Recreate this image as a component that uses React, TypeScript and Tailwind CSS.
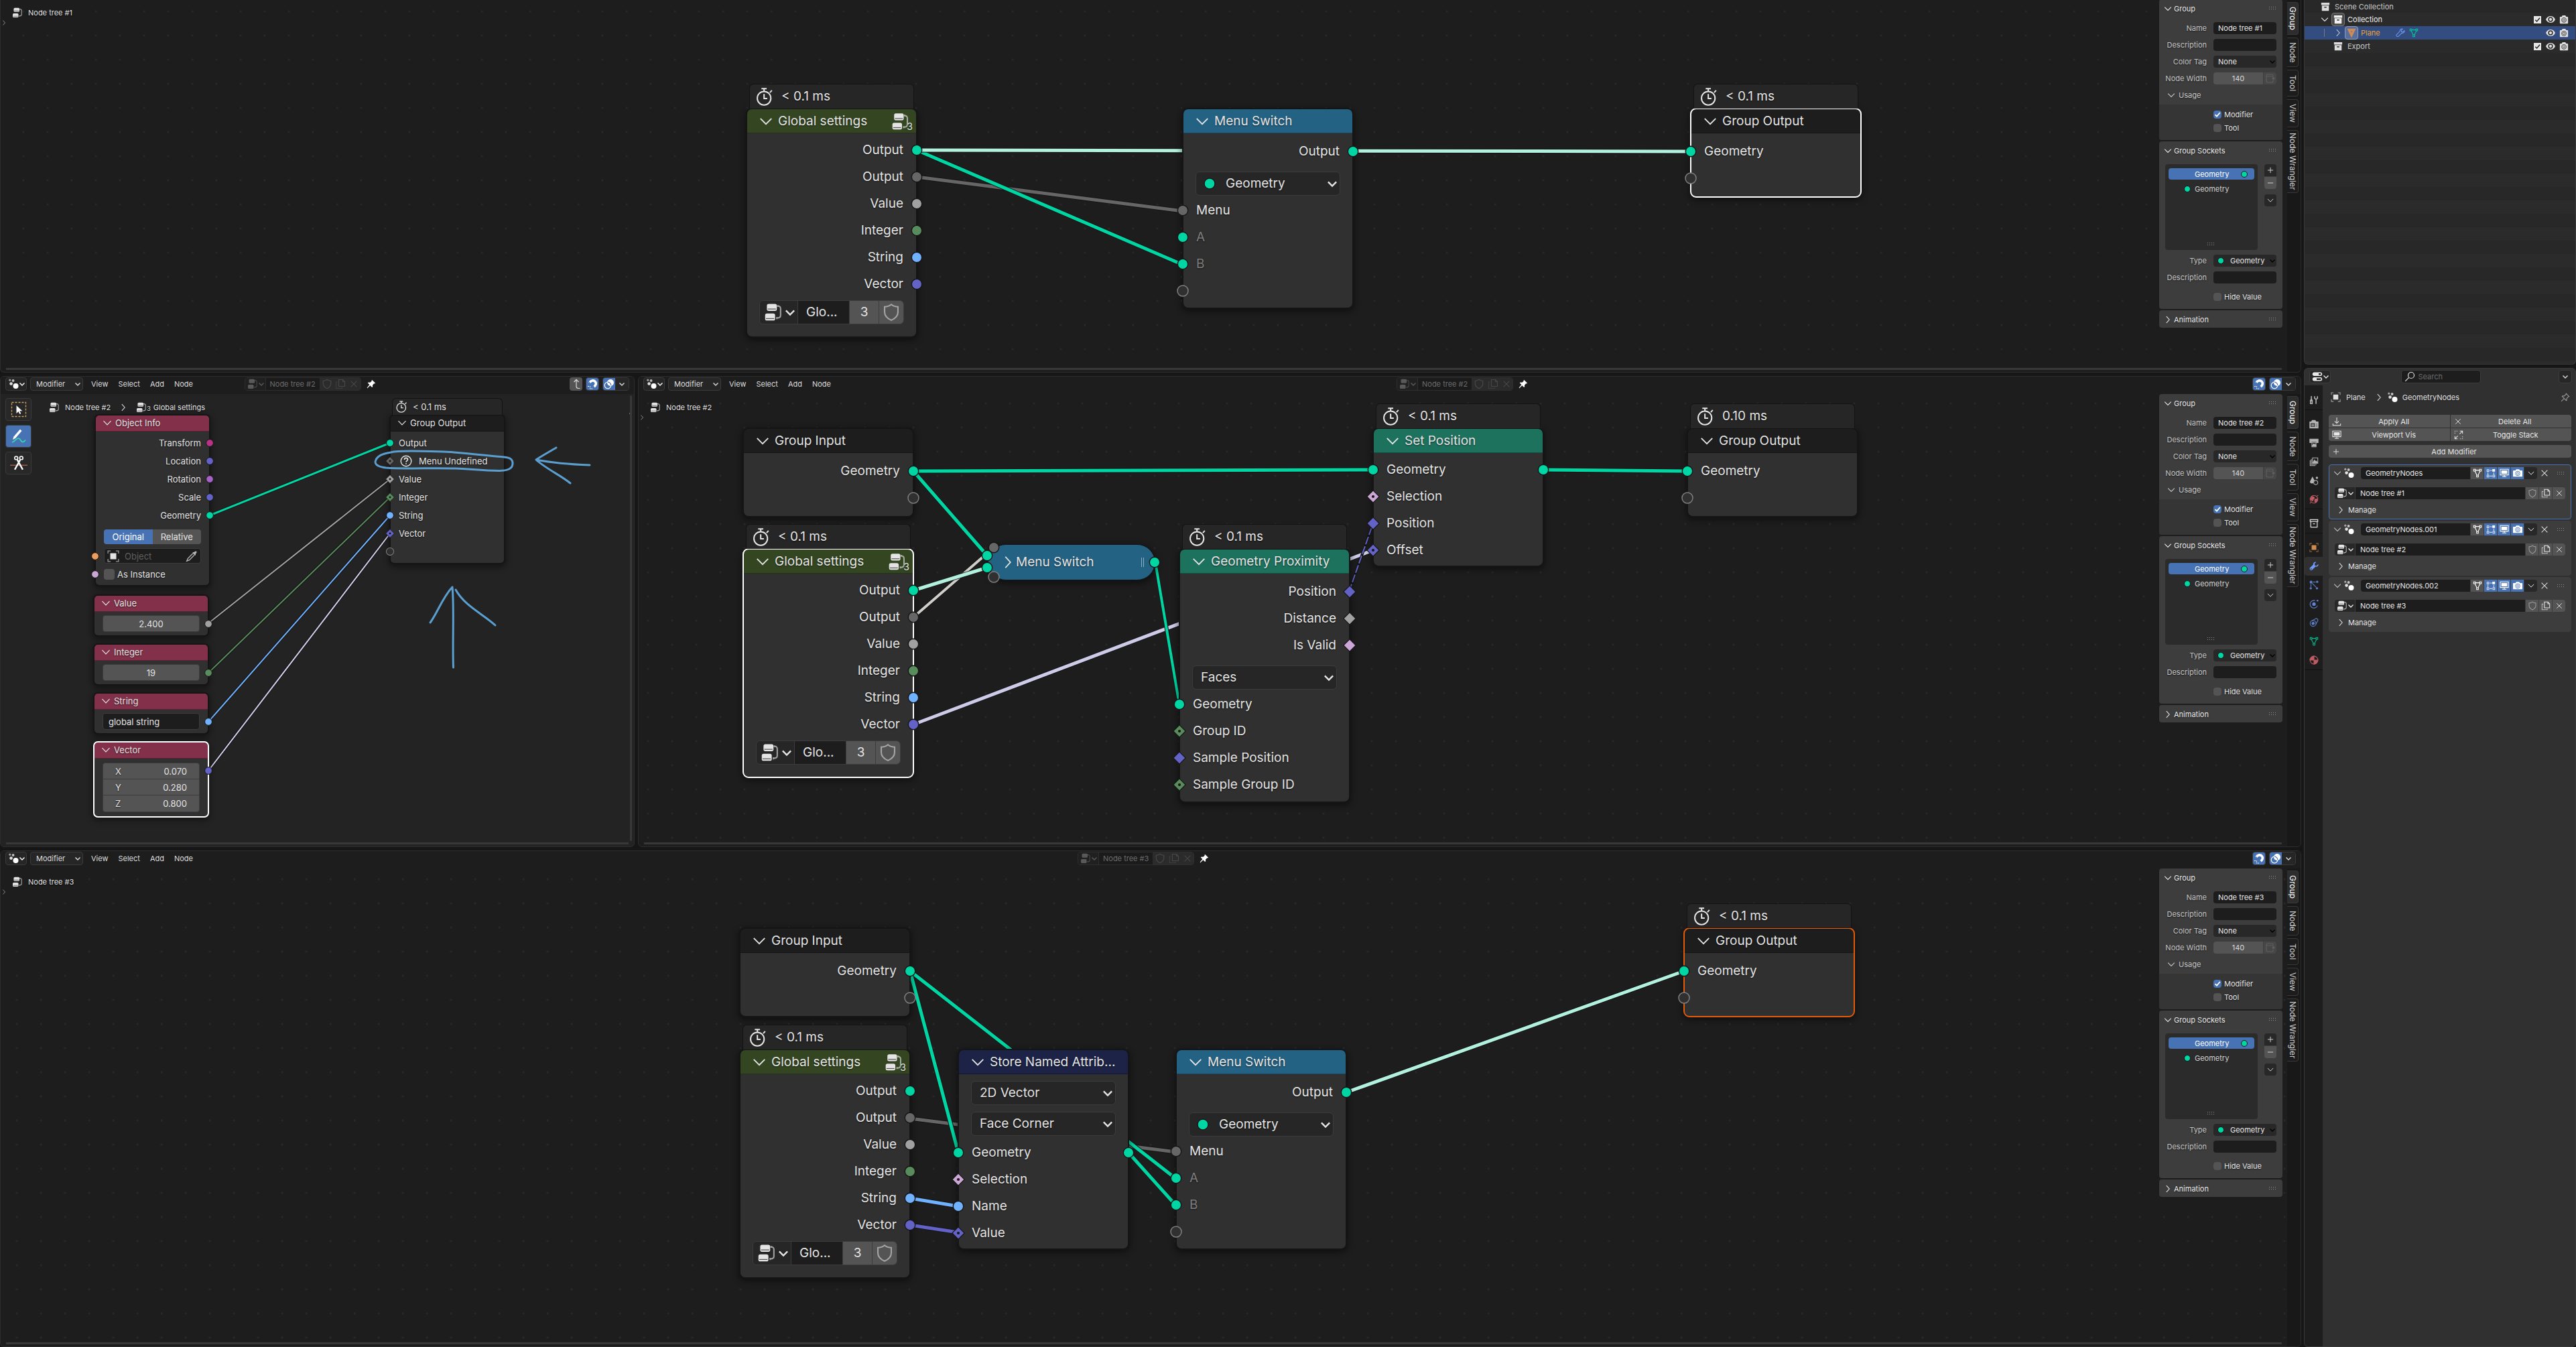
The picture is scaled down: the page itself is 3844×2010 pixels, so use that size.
import React, { useId } from "react";

type Kind =
  | "geometry" | "menu" | "value" | "integer" | "string" | "vector"
  | "boolean" | "rotation" | "matrix" | "object" | "virtual";
type Shape = "circle" | "diamond" | "field";
type Size = "lg" | "sm";

const SOCKET_FILL: Record<Kind, string> = {
  geometry: "#00d6a3",
  menu: "#666666",
  value: "#a1a1a1",
  integer: "#598c5c",
  string: "#70b2ff",
  vector: "#6363c7",
  boolean: "#cca6d6",
  rotation: "#a663c7",
  matrix: "#b83385",
  object: "#ed9e5c",
  virtual: "#303030",
};

/* ---------- icons ---------- */

type IconProps = { className?: string };

function Svg({ className = "size-3.5", children }: IconProps & { children: React.ReactNode }) {
  return (
    <svg viewBox="0 0 16 16" className={`shrink-0 ${className}`} fill="none" stroke="currentColor" strokeWidth="1.2" aria-hidden="true">
      {children}
    </svg>
  );
}

const ChevronDown = ({ className }: IconProps) => (
  <Svg className={className}><path d="M2.5 5.2 8 10.8l5.5-5.6" /></Svg>
);
const ChevronRight = ({ className }: IconProps) => (
  <Svg className={className}><path d="M5.5 2.5 10.5 8l-5 5.5" /></Svg>
);
const SmallChevron = ({ className }: IconProps) => (
  <Svg className={className}><path d="M4.5 6.5 8 10l3.5-3.5" strokeWidth="1.4" /></Svg>
);
const TreeIcon = ({ className }: IconProps) => (
  <Svg className={className}>
    <rect x="2.5" y="0.8" width="8.5" height="6" rx="1.5" fill="currentColor" stroke="none" />
    <path d="M3.2 5.2h7" stroke="#555" strokeWidth="0.7" />
    <rect x="1" y="9" width="8.5" height="6" rx="1.5" fill="currentColor" stroke="none" />
    <path d="M1.7 13.3h7" stroke="#555" strokeWidth="0.7" />
    <path d="M12 2.6c1.5.2 2.2 1 2.2 2.4v5.5c0 1.5-1 2.3-3 2.4M11.8 1.8v1.6M11 12v1.8" opacity="0.65" />
  </Svg>
);
const GeoNodesIcon = ({ className }: IconProps) => (
  <Svg className={className}>
    <g fill="currentColor" stroke="none">
      <circle cx="2.8" cy="2.2" r="1.6" opacity="0.55" />
      <circle cx="7.6" cy="3" r="1.9" opacity="0.7" />
      <circle cx="4.6" cy="7.6" r="2.3" opacity="0.85" />
      <circle cx="11.5" cy="11" r="4" />
    </g>
  </Svg>
);
const ShieldIcon = ({ className }: IconProps) => (
  <Svg className={className}><path d="M8 1.3c1.6 1.3 3.4 2 5.7 2v4.5c0 3.3-2.6 5.5-5.7 7-3.1-1.5-5.7-3.7-5.7-7V3.3c2.3 0 4.1-.7 5.7-2z" /></Svg>
);
const CopyIcon = ({ className }: IconProps) => (
  <Svg className={className}>
    <path d="M5.5 1.5h6l3 3v7h-9z" />
    <path d="M11.5 1.5v3h3" />
    <path d="M3.5 5h-2v9.5h9v-1.5" opacity="0.7" />
  </Svg>
);
const CloseIcon = ({ className }: IconProps) => (
  <Svg className={className}><path d="m3 3 10 10m0-10-10 10" /></Svg>
);
const PinFilled = ({ className }: IconProps) => (
  <Svg className={className}>
    <path d="M9.5 1 15 6.5l-1.2 1-1-.4-2.6 2.8.3 2.8-1.2 1L6.1 10.5 1.5 15l-.7-.2.2-.7 4-4.9L2 6.3l1.2-1.1 2.8.3L8.8 3l-.4-1z" fill="currentColor" stroke="none" />
  </Svg>
);
const PinOutline = ({ className }: IconProps) => (
  <Svg className={className}>
    <path d="M9.5 1.5 14.5 6.5 13 7l-2.7 3 .2 2.5-.8.8L2.7 6.3l.8-.8 2.5.2L9 3zM6 10l-4.8 4.8" />
  </Svg>
);
const MagnetIcon = ({ className }: IconProps) => (
  <Svg className={className}>
    <path d="M3.6 6.2C6 2.6 9.6 1.8 12 4.2s1.5 5.6-1.6 8.3" strokeWidth="3.6" />
    <path d="M2.4 4.4 5.6 7.4M8.6 10.4l3.2 3.2" stroke="#4772b3" strokeWidth="1" />
    <path d="M1 11.5h3.5V15H8" strokeDasharray="2 1" strokeWidth="1" />
  </Svg>
);
const OverlayIcon = ({ className }: IconProps) => (
  <Svg className={className}>
    <circle cx="10" cy="6" r="5" fill="currentColor" stroke="none" />
    <circle cx="6" cy="10" r="4.8" />
    <path d="M6 5.2A4.8 4.8 0 0 1 10.8 10" stroke="#4772b3" />
  </Svg>
);
const ParentIcon = ({ className }: IconProps) => (
  <Svg className={className}><path d="M4.5 5 8 1.3 11.5 5M8 1.5v10c0 2 1 3 3 3h2.5" /></Svg>
);
const CameraIcon = ({ className }: IconProps) => (
  <Svg className={className}>
    <path d="M1 4.5c0-.6.4-1 1-1h2.2L5.5 1h5l1.3 2.5H14c.6 0 1 .4 1 1V14c0 .6-.4 1-1 1H2c-.6 0-1-.4-1-1z" fill="currentColor" stroke="none" />
    <circle cx="8" cy="9" r="4" stroke="#333" strokeWidth="1" />
    <circle cx="8" cy="9" r="1.9" stroke="#333" strokeWidth="0.9" />
  </Svg>
);
const RenderIcon = ({ className }: IconProps) => (
  <Svg className={className}>
    <path d="M0 4.5c0-.6.4-1 1-1h3.2L5.5 1.5h5l1.3 2H15c.6 0 1 .4 1 1V13c0 .6-.4 1-1 1H1c-.6 0-1-.4-1-1z" fill="currentColor" stroke="none" />
    <circle cx="8" cy="8.5" r="3.8" stroke="#4772b3" strokeWidth="1" />
    <circle cx="8" cy="8.5" r="1.7" stroke="#4772b3" strokeWidth="0.9" />
  </Svg>
);
const EyeIcon = ({ className }: IconProps) => (
  <Svg className={className}>
    <path d="M0 8c1.8-3.8 4.7-5.6 8-5.6S14.2 4.2 16 8c-1.8 3.8-4.7 5.6-8 5.6S1.8 11.8 0 8z" fill="currentColor" stroke="none" />
    <circle cx="8" cy="8" r="3.3" stroke="#2b2b2b" strokeWidth="1.7" />
  </Svg>
);
const CollectionIcon = ({ className }: IconProps) => (
  <Svg className={className}>
    <path d="M1 1h14v4H1zM2 6h12v9H2z" fill="currentColor" stroke="none" />
    <path d="M6 9h4" stroke="#333" strokeWidth="1.8" />
  </Svg>
);
const CollectionOutline = ({ className }: IconProps) => (
  <Svg className={className}><path d="M1.5 1.5h13v3.3h-13zM2.5 4.8h11v9.7h-11zM6.3 8.6h3.4" strokeWidth="1.4" /></Svg>
);
const MeshIcon = ({ className }: IconProps) => (
  <Svg className={className}>
    <path d="M1.5 1.5h3v3h-3zM11.5 1.5h3v3h-3zM6.5 11.5h3v3h-3zM4.5 3h7M3.5 4.5l3.5 7M12.5 4.5 9 11.5" />
  </Svg>
);
const WrenchIcon = ({ className }: IconProps) => (
  <Svg className={className}>
    <path d="M14.6 4.2 12 6.5 9.7 6.2 9.3 4l2.5-2.6c-2.5-.8-5 1-4.6 3.9L1.6 11c-1.5 1.5.9 4.5 3 2.8l5.6-5.5c2.9.6 5.2-1.6 4.4-4.1z" />
  </Svg>
);
const WrenchFilled = ({ className }: IconProps) => (
  <Svg className={className}>
    <path d="M15.3 4.2 12.3 7 9.5 6.5 9 3.7 11.8.8C9 0 6.3 2 6.7 5.2L1.2 10.7c-1.8 1.9 1.2 5.6 3.7 3.5l5.7-5.5c3.2.6 5.6-1.7 4.7-4.5z" fill="currentColor" stroke="none" />
    <circle cx="3.2" cy="12.6" r="1" fill="#303030" stroke="none" />
  </Svg>
);
const ObjectIcon = ({ className }: IconProps) => (
  <Svg className={className}>
    <path d="M1 4.5V1h3.5M11.5 1H15v3.5M15 11.5V15h-3.5M4.5 15H1v-3.5" opacity="0.6" />
    <path d="M4 4h8v8H4z" fill="currentColor" stroke="none" />
  </Svg>
);
const EditModeIcon = ({ className }: IconProps) => (
  <Svg className={className}>
    <path d="M1.5 2h3v3h-3zM1.5 11.5h3v3h-3zM11.5 11.5h3v3h-3zM6 3.5h4M3 6.5v4M13 6.5v4M6 13h4" opacity="0.8" />
    <path d="M10.5 1H15v4.5h-4.5z" fill="currentColor" stroke="none" />
  </Svg>
);
const MonitorIcon = ({ className }: IconProps) => (
  <Svg className={className}>
    <path d="M1 1.5h14V11H1zM8 11v2.5M4.5 14h7" />
    <path d="M3 3.5h10V9H3z" fill="currentColor" stroke="none" />
  </Svg>
);
const DownloadIcon = ({ className }: IconProps) => (
  <Svg className={className}><path d="M8 1v10M4.5 7.5 8 11l3.5-3.5M1.5 11.5v3h13v-3" /></Svg>
);
const ExpandIcon = ({ className }: IconProps) => (
  <Svg className={className}>
    <path d="M9.5 6.5 14.5 1.5M10 1.5h4.5V6M6.5 9.5l-5 5M1.5 10v4.5H6" />
    <path d="M1.5 6V1.5H6M14.5 10v4.5H10" strokeDasharray="2 1.5" opacity="0.7" />
  </Svg>
);
const PlusIcon = ({ className }: IconProps) => <Svg className={className}><path d="M8 2.5v11M2.5 8h11" /></Svg>;
const MinusIcon = ({ className }: IconProps) => <Svg className={className}><path d="M2.5 8h11" /></Svg>;
const SearchIcon = ({ className }: IconProps) => (
  <Svg className={className}><circle cx="10" cy="6" r="4.5" /><path d="M6.5 9.5 1.2 14.8" /></Svg>
);
const StopwatchIcon = ({ className }: IconProps) => (
  <Svg className={className}>
    <circle cx="7.8" cy="9.2" r="6" />
    <path d="M7.8 5.5v4h2.8M5.5.8h4.6M7.8.8v2.3M13 4.2l1.7-1.9" />
  </Svg>
);
const PropsEditorIcon = ({ className }: IconProps) => (
  <Svg className={className}>
    <rect x="0.8" y="1.5" width="14.4" height="5.5" rx="2.7" fill="currentColor" stroke="none" />
    <rect x="0.8" y="9" width="14.4" height="5.5" rx="2.7" fill="currentColor" stroke="none" />
    <path d="M10 3h2.5c1.6 0 1.6 2.5 0 2.5H10zM7 10.5h5.5c1.6 0 1.6 2.5 0 2.5H7z" fill="#222" stroke="none" />
  </Svg>
);
const EyedropperIcon = ({ className }: IconProps) => (
  <Svg className={className}>
    <path d="M9 3.5 12.5 7l1-1c-.4-.6-.5-1 .3-1.8C16 2 13.7.2 12 2c-.8.9-1.3.8-1.9.5z" fill="currentColor" stroke="none" />
    <path d="M9.5 4.5 3 11l-1.5 3.5L5 13l6.5-6.5" />
  </Svg>
);
const NodeToggle = ({ className }: IconProps) => (
  <Svg className={className}>
    <path d="M12 5V3.500c0-1-.5-1.500-1.500-1.500h-7C2.500 2 2 2.500 2 3.500v9c0 1 .5 1.500 1.500 1.500h7c1 0 1.500-.5 1.500-1.500V11M2 5h10" />
    <circle cx="12.500" cy="8" r="2" fill="currentColor" stroke="none" />
  </Svg>
);

/* ---------- sockets and nodes ---------- */

function Socket({ kind, shape = "circle", size = "lg", side }: { kind: Kind; shape?: Shape; size?: Size; side: "left" | "right" }) {
  const place =
    size === "lg"
      ? side === "left" ? "size-5 -left-2.5" : "size-5 -right-2.5"
      : side === "left" ? "size-3.5 -left-[7px]" : "size-3.5 -right-[7px]";
  const fill = SOCKET_FILL[kind];
  return (
    <svg viewBox="0 0 20 20" className={`absolute top-1/2 -translate-y-1/2 ${place}`} aria-hidden="true">
      {kind === "virtual" ? (
        <circle cx="10" cy="10" r="8" fill={fill} stroke="#808080" strokeWidth="1.5" />
      ) : shape === "circle" ? (
        <circle cx="10" cy="10" r="7.7" fill={fill} stroke="#161616" strokeWidth="1.4" />
      ) : (
        <>
          <path d="M10 .8 19.2 10 10 19.2.8 10z" fill={fill} stroke="#161616" strokeWidth="1.2" />
          {shape === "field" && <circle cx="10" cy="10" r="2.1" fill="#161616" />}
        </>
      )}
    </svg>
  );
}

type RowProps = {
  label?: string;
  kind: Kind;
  shape?: Shape;
  out?: boolean;
  dim?: boolean;
  size?: Size;
  also?: Kind;
};

function Row({ label, kind, shape, out = false, dim = false, size = "lg", also }: RowProps) {
  return (
    <div
      className={`relative flex items-center ${size === "lg" ? "h-10 px-5" : "h-[27px] px-[13px]"} ${out ? "justify-end" : ""} ${dim ? "text-[#7d7d7d]" : ""}`}
    >
      <Socket kind={kind} shape={shape} size={size} side={out ? "right" : "left"} />
      {also && <Socket kind={also} size={size} side="right" />}
      {label}
    </div>
  );
}

type NodeProps = {
  title: string;
  place: string;
  header: string;
  size?: Size;
  time?: string;
  edge?: string;
  users?: string;
  children: React.ReactNode;
};

function Node({ title, place, header, size = "lg", time, edge = "outline-[#151515]", users, children }: NodeProps) {
  const lg = size === "lg";
  return (
    <section
      className={`absolute text-[#e4e4e4] [text-shadow:0_1px_2px_rgba(0,0,0,0.6)] ${lg ? "w-[254px] text-[19px] leading-6" : "w-[171px] text-[13px] leading-4"} ${place}`}
    >
      {time && (
        <div
          className={`absolute bottom-full flex items-center rounded-t-md border border-b-0 border-[#131313] bg-[#262626] ${lg ? "inset-x-1 h-[37px] gap-3 pl-2" : "inset-x-[3px] h-[25px] gap-2 pl-1"}`}
        >
          <StopwatchIcon className={lg ? "size-[27px]" : "size-[18px]"} />
          {time}
        </div>
      )}
      <div className={`bg-[#303030] shadow-[0_3px_10px_2px_rgba(0,0,0,0.45)] outline-2 -outline-offset-1 ${lg ? "rounded-lg" : "rounded-md outline-1"} ${edge}`}>
        <h2
          className={`flex items-center border-b border-black/30 font-normal ${lg ? "h-[37px] gap-1.5 rounded-t-lg pl-[17px] pr-1.5 pt-0.5" : "h-[25px] gap-1 rounded-t-md pl-2.5 pr-1"} ${header}`}
        >
          <ChevronDown className={lg ? "size-6" : "size-4"} />
          <span className="grow whitespace-nowrap">{title}</span>
          {users && (
            <span className="flex items-end">
              <TreeIcon className="size-[27px]" />
              <span className="-ml-1 text-sm leading-3">{users}</span>
            </span>
          )}
        </h2>
        {children}
      </div>
    </section>
  );
}

function NodeSelect({ value, dot = false }: { value: string; dot?: boolean }) {
  return (
    <label className="relative mx-[19px] block h-9">
      {dot && (
        <svg viewBox="0 0 20 20" className="absolute left-[11px] top-2 size-5" aria-hidden="true">
          <circle cx="10" cy="10" r="7.9" fill="#00d6a3" stroke="#121212" strokeWidth="1.2" />
        </svg>
      )}
      <select
        aria-label={value}
        className={`h-full w-full appearance-none rounded-md border border-[#3c3c3c] bg-[#262626] [text-shadow:inherit] ${dot ? "pl-[44px]" : "pl-3"}`}
      >
        <option>{value}</option>
      </select>
      <SmallChevron className="pointer-events-none absolute -right-0.5 top-1 size-7" />
    </label>
  );
}

function GlobalSettings({ place, edge }: { place: string; edge?: string }) {
  return (
    <Node title="Global settings" place={place} header="bg-[#344621]" time="&lt; 0.1 ms" users="3" edge={edge}>
      <div className="pt-[5px]">
        <Row out label="Output" kind="geometry" />
        <Row out label="Output" kind="menu" />
        <Row out label="Value" kind="value" />
        <Row out label="Integer" kind="integer" />
        <Row out label="String" kind="string" />
        <Row out label="Vector" kind="vector" />
      </div>
      <div className="px-[19px] pb-[19px] pt-1">
        <div className="flex h-9 divide-x divide-[#3c3c3c] overflow-hidden rounded-md border border-[#3c3c3c]">
          <button type="button" aria-label="Browse node groups" className="flex w-[57px] items-center bg-[#262626] pl-1.5">
            <TreeIcon className="size-7" />
            <SmallChevron className="-ml-[3px] size-7" />
          </button>
          <input aria-label="Node group" defaultValue="Glo..." className="w-0 grow bg-[#1d1d1d] pl-3" />
          <button type="button" className="w-11 bg-[#545454]">3</button>
          <button type="button" aria-label="Fake user" className="flex w-9 items-center justify-center bg-[#545454] text-[#a5a5a5]">
            <ShieldIcon className="size-7" />
          </button>
        </div>
      </div>
    </Node>
  );
}

function MenuSwitch({ place }: { place: string }) {
  return (
    <Node title="Menu Switch" place={place} header="bg-[#246283]">
      <div className="pb-1.5 pt-[7px]">
        <Row out label="Output" kind="geometry" />
        <div className="pb-0.5 pt-2.5"><NodeSelect value="Geometry" dot /></div>
        <Row label="Menu" kind="menu" />
        <Row label="A" kind="geometry" dim />
        <Row label="B" kind="geometry" dim />
        <Row kind="virtual" />
      </div>
    </Node>
  );
}

function GroupIO({ title, place, out = false, time, edge }: { title: string; place: string; out?: boolean; time?: string; edge?: string }) {
  return (
    <Node title={title} place={place} header="bg-[#1d1d1d]" time={time} edge={edge}>
      <div className="pb-2 pt-[7px]">
        <Row out={out} label="Geometry" kind="geometry" />
        <Row out={out} kind="virtual" />
      </div>
    </Node>
  );
}

type Link = { d: string; color: string; width?: number; dash?: string };

function Links({ links, width = 5 }: { links: Link[]; width?: number }) {
  return (
    <svg className="absolute inset-0 size-full overflow-visible" fill="none" aria-hidden="true">
      {links.map((l) => (
        <g key={l.d}>
          <path d={l.d} stroke="#141414" strokeWidth={(l.width ?? width) + 2} />
          <path d={l.d} stroke={l.color} strokeWidth={l.width ?? width} strokeDasharray={l.dash} />
        </g>
      ))}
    </svg>
  );
}

/* ---------- editor header ---------- */

function HeaderTree({ name }: { name: string }) {
  return (
    <div className="flex items-center gap-2 pr-[22px]">
      <div className="flex h-5 w-[174px] overflow-hidden rounded border border-[#2e2e2e] text-[#6c6c6c]">
        <button type="button" aria-label="Browse node trees" className="flex w-[30px] items-center bg-[#202020] pl-[3px] text-[#5a5a5a]">
          <TreeIcon className="size-4" />
          <SmallChevron className="-ml-[3px] size-4" />
        </button>
        <input aria-label="Node tree" defaultValue={name} className="w-0 grow border-x border-[#2e2e2e] bg-[#1b1b1b] pl-1.5" />
        <div className="flex w-[60px] items-center justify-around bg-[#2b2b2b] text-[#474747]">
          <button type="button" aria-label="Fake user"><ShieldIcon className="size-4" /></button>
          <button type="button" aria-label="Duplicate"><CopyIcon className="size-4" /></button>
          <button type="button" aria-label="Unlink"><CloseIcon className="size-3.5" /></button>
        </div>
      </div>
      <button type="button" aria-label="Pin" className="text-white"><PinFilled className="size-3.5" /></button>
    </div>
  );
}

function EditorHeader({ tree, nested = false }: { tree: string; nested?: boolean }) {
  return (
    <header className="grid h-[26px] shrink-0 grid-cols-[1fr_auto_1fr] items-start bg-[#1d1d1d] px-[7px] pt-px text-[#dcdcdc]">
      <div className="flex items-center">
        <button type="button" aria-label="Editor type" className="flex h-5 w-8 items-center rounded border border-[#3a3a3a] bg-[#262626] pl-[3px] text-white">
          <GeoNodesIcon className="size-4" />
          <SmallChevron className="-ml-[3px] size-4" />
        </button>
        <label className="relative ml-[5px] block h-5 w-[79px]">
          <select aria-label="Node tree type" className="size-full appearance-none rounded border border-[#3a3a3a] bg-[#262626] pl-2">
            <option>Modifier</option>
          </select>
          <SmallChevron className="pointer-events-none absolute right-0 top-0.5 size-4" />
        </label>
        <nav className="ml-3 flex gap-[15px]">
          <button type="button">View</button>
          <button type="button">Select</button>
          <button type="button">Add</button>
          <button type="button">Node</button>
        </nav>
      </div>
      <HeaderTree name={tree} />
      <div className="flex justify-end gap-[5px]">
        {nested && (
          <button type="button" aria-label="Parent node tree" className="flex h-5 w-[19px] items-center justify-center rounded bg-[#545454]">
            <ParentIcon className="size-4" />
          </button>
        )}
        <button type="button" aria-label="Snap" className="flex h-5 w-5 items-center justify-center rounded border border-[#3a3a3a] bg-[#4772b3] text-white">
          <MagnetIcon className="size-4" />
        </button>
        <div className="flex h-5 overflow-hidden rounded border border-[#3a3a3a]">
          <button type="button" aria-label="Overlays" className="flex w-[18px] items-center justify-center bg-[#4772b3] text-white">
            <OverlayIcon className="size-4" />
          </button>
          <button type="button" aria-label="Overlay options" className="flex w-5 items-center justify-center bg-[#262626]">
            <SmallChevron className="size-4" />
          </button>
        </div>
      </div>
    </header>
  );
}

/* ---------- sidebar ---------- */

function Grip() {
  return (
    <svg viewBox="0 0 12 5" className="h-[5px] w-3 shrink-0" fill="#8a8a8a" aria-hidden="true">
      <path d="M0 0h1v1H0zM3 0h1v1H3zM6 0h1v1H6zM9 0h1v1H9zM0 3h1v1H0zM3 3h1v1H3zM6 3h1v1H6zM9 3h1v1H9z" />
    </svg>
  );
}

function PanelTitle({ title, closed = false }: { title: string; closed?: boolean }) {
  return (
    <h3 className="flex h-[26px] items-center gap-0.5 pl-1.5 pr-2 pt-px text-[#eaeaea]">
      {closed ? <ChevronRight /> : <ChevronDown />}
      <span className="grow">{title}</span>
      <Grip />
    </h3>
  );
}

function Check({ label, checked = false }: { label: string; checked?: boolean }) {
  return (
    <label className="relative flex h-5 items-center gap-1 pl-[81px] text-[#e4e4e4]">
      <input type="checkbox" defaultChecked={checked} className="peer size-3 appearance-none rounded-sm bg-[#545454] checked:bg-[#4772b3]" />
      <svg viewBox="0 0 12 12" className="pointer-events-none absolute left-[81px] hidden size-3 peer-checked:block" fill="none" stroke="white" strokeWidth="1.8" aria-hidden="true">
        <path d="M2.5 6.2 5 8.7 9.8 3" />
      </svg>
      {label}
    </label>
  );
}

function Field({ label, children }: { label: string; children: (id: string) => React.ReactNode }) {
  const id = useId();
  return (
    <div className="grid h-[18px] grid-cols-[71px_94px] items-center gap-2.5">
      <label htmlFor={id} className="text-right text-[#c4c4c4]">{label}</label>
      {children(id)}
    </div>
  );
}

const TABS = [
  ["Group", "h-[49px]"],
  ["Node", "h-11"],
  ["Tool", "h-10"],
  ["View", "h-[42px]"],
  ["Node Wrangler", "h-[94px]"],
];

function Sidebar({ name }: { name: string }) {
  return (
    <aside className="relative mr-[7px] flex w-[184px] shrink-0 flex-col gap-0.5 [text-shadow:0_1px_2px_rgba(0,0,0,0.5)]">
      <section className="overflow-hidden rounded bg-[#3d3d3d]">
        <PanelTitle title="Group" />
        <div className="flex flex-col gap-[7px] pt-2">
          <Field label="Name">
            {(id) => <input id={id} defaultValue={name} className="h-full w-full rounded-sm bg-[#1d1d1d] pl-[7px] text-[#e6e6e6]" />}
          </Field>
          <Field label="Description">
            {(id) => <input id={id} className="h-full w-full rounded-sm bg-[#1d1d1d]" />}
          </Field>
          <Field label="Color Tag">
            {(id) => (
              <span className="relative h-full">
                <select id={id} className="size-full appearance-none rounded-sm bg-[#282828] pl-[7px] text-[#e6e6e6]"><option>None</option></select>
                <SmallChevron className="pointer-events-none absolute -right-0.5 top-px size-4" />
              </span>
            )}
          </Field>
          <Field label="Node Width">
            {(id) => (
              <span className="flex h-full gap-px">
                <input id={id} defaultValue="140" className="w-0 grow rounded-l-sm bg-[#545454] text-center text-[#d8d8d8]" />
                <button type="button" aria-label="Set from node" className="flex w-[19px] items-center justify-center rounded-r-sm bg-[#474747] text-[#5e5e5e]">
                  <NodeToggle className="size-4" />
                </button>
              </span>
            )}
          </Field>
        </div>
        <h4 className="flex h-[30px] items-center gap-1 pl-[11px] pt-0.5 text-[#c8c8c8]">
          <ChevronDown />
          Usage
        </h4>
        <div className="bg-[#353535] pb-2 pt-[5px]">
          <Check label="Modifier" checked />
          <Check label="Tool" />
        </div>
      </section>
      <section className="rounded bg-[#3d3d3d] pb-2">
        <PanelTitle title="Group Sockets" />
        <div className="mb-[7px] mt-2 flex justify-between px-[9px]">
          <div className="flex h-32 w-[138px] flex-col rounded bg-[#2b2b2b] px-[5px] pt-1.5 text-[#d0d0d0]">
            <button type="button" className="relative flex h-[17px] items-center rounded-sm bg-[#4772b3] pl-[39px] text-white">
              Geometry
              <span className="absolute right-2.5 size-2.5 rounded-full border border-[#161616] bg-[#00d6a3]" />
            </button>
            <button type="button" className="relative mt-[5px] flex h-[17px] items-center pl-[39px]">
              <span className="absolute left-[23px] size-2.5 rounded-full border border-[#161616] bg-[#00d6a3]" />
              Geometry
            </button>
            <span className="mb-1.5 mt-auto self-center"><Grip /></span>
          </div>
          <div className="flex w-[18px] flex-col text-[#e0e0e0]">
            <button type="button" aria-label="Add socket" className="flex h-[18px] items-center justify-center rounded-t-sm bg-[#282828]"><PlusIcon className="size-3" /></button>
            <button type="button" aria-label="Remove socket" className="mt-px flex h-[18px] items-center justify-center rounded-b-sm bg-[#545454]"><MinusIcon className="size-3" /></button>
            <button type="button" aria-label="Socket options" className="mt-2 flex h-[18px] items-center justify-center rounded-sm bg-[#282828]"><ChevronDown className="size-3" /></button>
          </div>
        </div>
        <div className="mb-2.5 flex flex-col gap-[7px]">
          <Field label="Type">
            {(id) => (
              <span className="relative flex h-full items-center">
                <select id={id} className="size-full appearance-none rounded-sm bg-[#282828] pl-[25px] text-[#e6e6e6]"><option>Geometry</option></select>
                <span className="pointer-events-none absolute left-1.5 size-2.5 rounded-full border border-[#161616] bg-[#00d6a3]" />
                <SmallChevron className="pointer-events-none absolute -right-0.5 size-4" />
              </span>
            )}
          </Field>
          <Field label="Description">
            {(id) => <input id={id} className="h-full w-full rounded-sm bg-[#1d1d1d]" />}
          </Field>
        </div>
        <Check label="Hide Value" />
      </section>
      <section className="rounded bg-[#3d3d3d]">
        <PanelTitle title="Animation" closed />
      </section>
    </aside>
  );
}

function SideTabs() {
  return (
    <div role="tablist" aria-orientation="vertical" className="flex w-5 shrink-0 flex-col items-start gap-1 bg-[#181818] pt-[3px] text-xs">
      {TABS.map(([label, height], i) => (
        <button
          key={label}
          type="button"
          role="tab"
          aria-selected={i === 0}
          className={`flex w-[17px] items-center justify-center rounded-r border border-l-0 border-[#383838] whitespace-nowrap [writing-mode:vertical-rl] ${height} ${i === 0 ? "bg-[#2d2d2d] text-white" : "bg-[#1c1c1c] text-[#cacaca]"}`}
        >
          {label}
        </button>
      ))}
    </div>
  );
}

/* ---------- editor shell ---------- */

function Breadcrumb({ children }: { children: React.ReactNode }) {
  return <nav className="flex h-4 items-center whitespace-nowrap text-[#e2e2e2] [text-shadow:0_1px_2px_#000]">{children}</nav>;
}

type EditorProps = {
  tree: string;
  header?: boolean;
  grid: string;
  top?: string;
  children: React.ReactNode;
};

function TreeEditor({ tree, header = true, grid, top = "", children }: EditorProps) {
  return (
    <section className={`flex min-h-0 min-w-0 flex-col overflow-hidden border border-[#2d2d2d] bg-[#1d1d1d] ${header ? "rounded-md" : "rounded-b-md border-t-0"}`}>
      {header && <EditorHeader tree={tree} />}
      <div className="flex min-h-0 grow">
        <div className={`relative flex min-w-0 grow bg-[radial-gradient(circle,#282828_1px,transparent_2px)] bg-[size:36px_36px] ${grid}`}>
          <div className="relative min-w-0 grow">
            <div className={`pl-[17px] pt-3 ${top}`}>
              <Breadcrumb>
                <TreeIcon className="mr-2 size-4" />
                {tree}
              </Breadcrumb>
            </div>
            <ChevronRight className="mt-0.5 size-2.5 text-[#b0b0b0]" />
            {children}
          </div>
          <div className={top}><Sidebar name={tree} /></div>
          <div className="absolute inset-x-2 bottom-[3px] h-[3px] bg-[#383838]" />
        </div>
        <SideTabs />
      </div>
    </section>
  );
}

function NumberField({ label, value }: { label: string; value: string }) {
  return (
    <div className="px-[13px] pb-1.5 pt-[5px]">
      <input aria-label={label} defaultValue={value} className="block h-[25px] w-full rounded border border-[#3c3c3c] bg-[#545454] text-center" />
    </div>
  );
}

const TOOL = "flex h-[34px] w-[39px] items-center justify-center rounded border border-[#3a3a3a]";

function GroupEditor() {
  return (
    <section className="flex min-h-0 min-w-0 flex-col overflow-hidden rounded-md border border-[#2d2d2d] bg-[#232323]">
      <EditorHeader tree="Node tree #2" nested />
      <div className="relative min-h-0 grow">
        <div className="flex items-start pl-[7px]">
          <div className="flex flex-col gap-1.5 pt-1.5">
            <button type="button" aria-label="Select box" className={`${TOOL} bg-[#282828]`}>
              <svg viewBox="0 0 24 24" className="size-6" fill="none" aria-hidden="true">
                <path d="M1.500 1.500h21v21h-21z" stroke="#c9a15a" strokeWidth="1.3" strokeDasharray="3 2" />
                <path d="M8.500 6v12l3-3 2 4 1.800-1-2-3.700h4z" fill="#fff" />
              </svg>
            </button>
            <button type="button" aria-label="Annotate" className={`${TOOL} bg-[#4772b3]`}>
              <svg viewBox="0 0 24 24" className="size-6" fill="none" aria-hidden="true">
                <path d="M14 1.500 16.500 4 7 15l-4 2 1.500-4.500z" fill="#fff" />
                <path d="M2 21c4-1 6-6 9.500-6s3 5.500 6.500 5.500c2 0 3-1.500 4-3" stroke="#35d8ae" strokeWidth="1.6" />
              </svg>
            </button>
            <button type="button" aria-label="Links cut" className={`${TOOL} bg-[#282828]`}>
              <svg viewBox="0 0 24 24" className="size-[26px]" fill="none" aria-hidden="true">
                <path d="M0 15h24" stroke="#a0564b" strokeWidth="1.6" />
                <path d="M10 7.500 17.500 21M14 7.500 6.500 21" stroke="#fff" strokeWidth="2.2" />
                <circle cx="8.500" cy="5" r="2.2" stroke="#fff" strokeWidth="1.5" />
                <circle cx="15.500" cy="5" r="2.2" stroke="#fff" strokeWidth="1.5" />
              </svg>
            </button>
          </div>
          <div className="pl-[26px] pt-3">
            <Breadcrumb>
              <TreeIcon className="mr-2 size-4" />
              Node tree #2
              <ChevronRight className="mx-3 size-3.5" />
              <TreeIcon className="size-4" />
              <sub className="mr-1 text-[9px]">3</sub>
              Global settings
            </Breadcrumb>
          </div>
        </div>

        <Links
          width={3}
          links={[
            { d: "M312 181 581 73", color: "#00d6a3" },
            { d: "M310 342 581 127", color: "#a1a1a1", width: 2 },
            { d: "M310 416 581 154", color: "#598c5c", width: 2 },
            { d: "M310 489 581 181", color: "#70b2ff", width: 2 },
            { d: "M310 562 581 208", color: "#d5d2f0", width: 2 },
          ]}
        />

        <Node size="sm" title="Object Info" place="left-[141px] top-[31px]" header="bg-[#83314a]">
          <div className="pb-1 pt-[3px]">
            <Row size="sm" out label="Transform" kind="matrix" />
            <Row size="sm" out label="Location" kind="vector" />
            <Row size="sm" out label="Rotation" kind="rotation" />
            <Row size="sm" out label="Scale" kind="vector" />
            <Row size="sm" out label="Geometry" kind="geometry" />
            <div className="mx-[13px] mb-1 mt-2 flex h-[22px] overflow-hidden rounded">
              <button type="button" className="w-1/2 bg-[#4772b3] text-white">Original</button>
              <button type="button" className="w-1/2 bg-[#545454]">Relative</button>
            </div>
            <div className="relative flex h-[27px] items-center px-[13px]">
              <Socket kind="object" size="sm" side="left" />
              <label className="flex h-[23px] w-full items-center gap-2 rounded border border-[#3c3c3c] bg-[#1d1d1d] px-1">
                <ObjectIcon className="size-[18px]" />
                <input aria-label="Object" placeholder="Object" className="w-0 grow placeholder:text-[#5f5f5f]" />
                <EyedropperIcon className="size-[18px] text-[#b5b5b5]" />
              </label>
            </div>
            <div className="relative flex h-[27px] items-center px-[13px]">
              <Socket kind="boolean" size="sm" side="left" />
              <label className="flex items-center gap-1">
                <input type="checkbox" className="size-4 appearance-none rounded-sm bg-[#545454]" />
                As Instance
              </label>
            </div>
          </div>
        </Node>

        <Node size="sm" title="Value" place="left-[139px] top-[300px]" header="bg-[#83314a]">
          <div className="relative">
            <Socket kind="value" size="sm" side="right" />
            <NumberField label="Value" value="2.400" />
          </div>
        </Node>
        <Node size="sm" title="Integer" place="left-[139px] top-[373px]" header="bg-[#83314a]">
          <div className="relative">
            <Socket kind="integer" size="sm" side="right" />
            <NumberField label="Integer" value="19" />
          </div>
        </Node>
        <Node size="sm" title="String" place="left-[139px] top-[446px]" header="bg-[#83314a]">
          <div className="relative px-[13px] pb-1.5 pt-[5px]">
            <Socket kind="string" size="sm" side="right" />
            <input aria-label="String" defaultValue="global string" className="block h-[25px] w-full rounded border border-[#3c3c3c] bg-[#1d1d1d] pl-2" />
          </div>
        </Node>
        <Node size="sm" title="Vector" place="left-[139px] top-[519px]" header="bg-[#83314a]" edge="outline-white">
          <div className="px-[13px] pb-[7px] pt-1.5">
            <div className="flex flex-col divide-y divide-[#3c3c3c] rounded border border-[#3c3c3c] bg-[#545454]">
              {[["X", "0.070"], ["Y", "0.280"], ["Z", "0.800"]].map(([axis, v]) => (
                <label key={axis} className="flex h-6 items-center px-[18px]">
                  {axis}
                  <input defaultValue={v} className="w-0 grow text-right" />
                </label>
              ))}
            </div>
          </div>
          <div className="absolute inset-x-0 top-[43px]"><Socket kind="vector" size="sm" side="right" /></div>
        </Node>

        <Node size="sm" title="Group Output" place="left-[581px] top-[31px]" header="bg-[#1d1d1d]" time="&lt; 0.1 ms">
          <div className="pb-[5px] pt-[3px]">
            <Row size="sm" label="Output" kind="geometry" />
            <div className="relative flex h-[27px] items-center gap-2.5 pl-[15px]">
              <Socket kind="menu" shape="field" size="sm" side="left" />
              <svg viewBox="0 0 18 18" className="size-[18px]" fill="none" stroke="currentColor" strokeWidth="1.4" aria-hidden="true">
                <circle cx="9" cy="9" r="7.8" />
                <path d="M6.500 7c0-3.500 5-3.200 5-.4 0 1.900-2.500 2-2.500 4M9 12.200v1.600" strokeWidth="1.7" />
              </svg>
              Menu Undefined
            </div>
            <Row size="sm" label="Value" kind="value" shape="field" />
            <Row size="sm" label="Integer" kind="integer" shape="field" />
            <Row size="sm" label="String" kind="string" />
            <Row size="sm" label="Vector" kind="vector" shape="field" />
            <Row size="sm" kind="virtual" />
          </div>
        </Node>

        <svg className="pointer-events-none absolute inset-0 size-full" fill="none" stroke="#5a9fcf" strokeWidth="3" strokeLinecap="round" strokeLinejoin="round" aria-hidden="true">
          <path d="M559 101C561 92 570 89 582 87 595 84 625 85 672 86.500c25 2 50 5 74 7 12 1 18 2 18 10 0 7-6 11-20 11-25 0-45-3-65-3.500-35-1-80 1-104-1-9-1-16-4-16-9z" />
          <path d="M829 80C819 86 806 93 799 98M799 98c14 13 38 24 51 35M799 98c26 5 52 7 80 8" />
          <path d="M674 288C659 304 651 328 641 341M679 292c13 24 42 37 59 53M674 288c3 32 0 80 1.500 120" />
        </svg>
        <ChevronDown className="absolute right-0 top-6 size-2.5 rotate-90 text-[#b0b0b0]" />
        <div className="absolute inset-x-2 bottom-[3px] h-[3px] bg-[#383838]" />
        <div className="absolute bottom-2 right-[3px] top-0.5 w-[3px] rounded bg-[#383838]" />
      </div>
    </section>
  );
}

/* ---------- outliner ---------- */

function Toggles({ check = false }: { check?: boolean }) {
  return (
    <span className="ml-auto flex items-center gap-1.5 pr-2.5 text-[#e0e0e0]">
      {check && (
        <label className="relative mr-px flex">
          <input type="checkbox" aria-label="Include" defaultChecked className="size-[11px] appearance-none bg-[#e6e6e6]" />
          <svg viewBox="0 0 12 12" className="pointer-events-none absolute size-[11px]" fill="none" stroke="#222" strokeWidth="1.6" aria-hidden="true"><path d="M2.500 6.200 5 8.700 9.800 3" /></svg>
        </label>
      )}
      <button type="button" aria-label="Hide in viewport"><EyeIcon className="size-3.5" /></button>
      <button type="button" aria-label="Disable in renders"><CameraIcon className="size-3.5" /></button>
    </span>
  );
}

function Outliner() {
  return (
    <section className="min-h-0 overflow-hidden rounded-b-md border border-t-0 border-[#3a3a3a] bg-[repeating-linear-gradient(#282828_0_20px,#2b2b2b_20px_40px)] bg-[position:0_-1px] text-[#c8c8c8]">
      <div className="flex h-[19px] items-center gap-[7px] pl-6">
        <CollectionIcon className="size-3.5 text-[#dcdcdc]" />
        Scene Collection
      </div>
      <div className="flex h-5 items-center pl-[23px] text-[#f0f0f0]">
        <ChevronDown className="mr-[3px] size-3.5" />
        <span className="mr-1 flex size-5 items-center justify-center rounded border border-[#777] bg-[#4a4a4a]"><CollectionIcon className="size-3.5" /></span>
        Collection
        <Toggles check />
      </div>
      <div className="flex h-5 items-center bg-[#334d80] pl-[29px]">
        <span className="mr-[13px] h-3 w-px bg-[#7a7a7a]" />
        <ChevronRight className="mr-[3px] size-3.5" />
        <span className="mr-1 flex size-5 items-center justify-center rounded border border-[#8d9cbb] bg-[#596f9b] text-[#d08a58]">
          <Svg className="size-3.5"><path d="M1.500 1.500h13L8 15zM6 4.500h4L8 9.500z" fill="currentColor" fillRule="evenodd" /></Svg>
        </span>
        <span className="text-[#e8a13c]">Plane</span>
        <WrenchIcon className="ml-[23px] size-3.5 text-[#6d97f0]" />
        <MeshIcon className="ml-1.5 size-3.5 text-[#00c99a]" />
        <Toggles />
      </div>
      <div className="flex h-5 items-center gap-[7px] pl-[43px]">
        <CollectionIcon className="size-3.5 text-[#dcdcdc]" />
        Export
        <Toggles check />
      </div>
    </section>
  );
}

/* ---------- properties ---------- */

function PropTab({ color = "", label, active = false, children }: { color?: string; label: string; active?: boolean; children: React.ReactNode }) {
  return (
    <button type="button" aria-label={label} className={`flex h-7 w-full items-center justify-center ${color} ${active ? "rounded-l bg-[#303030]" : ""}`}>
      {children}
    </button>
  );
}

const Gap = () => <div className="h-2 border-t border-[#121212]" />;

function PropTabs() {
  return (
    <div className="flex w-[27px] shrink-0 flex-col bg-[#1d1d1d] pt-2 text-[#b5b5b5]">
      <PropTab label="Tool">
        <Svg><path d="M3.500 1v6M2 7h3M2 9v5h3V9zM11.500 6v8.500M9 1.500V4c0 3 5 3 5 0V1.500" strokeWidth="1.8" /></Svg>
      </PropTab>
      <Gap />
      <PropTab label="Render">
        <Svg><path d="M1 4h14v10.500H1zM4 3.500 5 1.500h5l1 2" fill="currentColor" /><path d="M3 7h6v5H3zM3 9.500h6M12.500 7v1.500M12.500 10v2" stroke="#333" /></Svg>
      </PropTab>
      <PropTab label="Output">
        <Svg><path d="M1 1.500h14v6h-2.500V5.500h-9v2H1z" fill="currentColor" /><path d="M4.500 7h7v7.500h-7z" /><path d="m5 13 2.500-3.500L9 11l1-1 1.500 3z" fill="currentColor" /></Svg>
      </PropTab>
      <PropTab label="View Layer">
        <Svg><path d="M5.500 1.500h9v9h-9zM3.500 3.500v9h9M1.500 5.500v9h9" /><path d="m6 10 3-5 2 3 1-1 2 3z" fill="currentColor" /></Svg>
      </PropTab>
      <PropTab label="Scene">
        <Svg><path d="M5.500 1 1 10c0 3.500 6 4 6 1.500 0-1 .5-2.500 2-3.500z" fill="currentColor" stroke="none" /><circle cx="11" cy="11.500" r="3.500" /><circle cx="13" cy="3.500" r="2" fill="currentColor" stroke="none" /></Svg>
      </PropTab>
      <PropTab color="text-[#bf5b63]" label="World">
        <Svg><circle cx="8" cy="8" r="6.500" /><path d="M4 3.500c2 0 4 0 4.500 2S6 8 6 10s-2 0-3.500-2zM10 8c2-1 4-.5 4 1s-2 4-3.500 4S8.500 9 10 8z" fill="currentColor" /><path d="m13 3 2-2M1 15l2-2" /></Svg>
      </PropTab>
      <Gap />
      <PropTab color="text-[#e0e0e0]" label="Collection"><CollectionOutline /></PropTab>
      <Gap />
      <PropTab color="text-[#d08a4a]" label="Object"><ObjectIcon /></PropTab>
      <PropTab color="text-[#6e9bf5]" label="Modifiers" active><WrenchFilled /></PropTab>
      <PropTab color="text-[#5f83d0]" label="Particles">
        <Svg><circle cx="3" cy="3" r="2.300" fill="currentColor" stroke="none" /><circle cx="13.500" cy="2.500" r="1.300" fill="currentColor" /><circle cx="13" cy="13.500" r="1.300" fill="currentColor" /><circle cx="2.500" cy="13.500" r="1.300" fill="currentColor" /><path d="M6 2.800h5M2.800 6v5M5 5l6.500 6.500" /></Svg>
      </PropTab>
      <PropTab color="text-[#5f83d0]" label="Physics">
        <Svg><circle cx="8" cy="8.500" r="3" fill="currentColor" stroke="none" /><path d="M10 2.500A6.500 6.500 0 1 0 14 11" /><circle cx="14" cy="2.500" r="1.500" fill="currentColor" stroke="none" /></Svg>
      </PropTab>
      <PropTab color="text-[#5f83d0]" label="Constraints">
        <Svg><circle cx="6.500" cy="9.500" r="5" /><circle cx="6.500" cy="9.500" r="2" fill="currentColor" /><path d="M4 5l7-3.500c2.500-.8 4.500 1 3.500 3.500L11 11" /></Svg>
      </PropTab>
      <PropTab color="text-[#00bf8f]" label="Data"><MeshIcon /></PropTab>
      <PropTab color="text-[#bf5b63]" label="Material">
        <Svg><circle cx="8" cy="8" r="6.700" /><path d="M8 8V1.300A6.700 6.700 0 0 0 1.300 8zM8 8v6.700A6.700 6.700 0 0 0 14.700 8z" fill="currentColor" /></Svg>
      </PropTab>
      <Gap />
    </div>
  );
}

function BigButton({ label, className = "", children }: { label: string; className?: string; children: React.ReactNode }) {
  return (
    <button type="button" className={`flex h-[19px] items-center bg-[#545454] px-[5px] text-[#e6e6e6] ${className}`}>
      {children}
      <span className="grow text-center">{label}</span>
    </button>
  );
}

const MOD = "flex w-[19px] shrink-0 items-center justify-center";

function ModifierCard({ name, tree, active = false }: { name: string; tree: string; active?: boolean }) {
  return (
    <section className={`h-[82px] rounded border bg-[#3d3d3d] pt-[3px] ${active ? "border-[#4772b3]" : "border-[#3d3d3d]"}`}>
      <div className="flex h-[18px] items-center pl-[5px] pr-2">
        <ChevronDown className="size-3.5 text-[#c0c0c0]" />
        <GeoNodesIcon className="ml-0.5 size-4 text-white" />
        <div className="ml-2.5 flex h-[18px] grow gap-px overflow-hidden rounded text-white">
          <input aria-label="Modifier name" defaultValue={name} className="w-0 grow bg-[#1d1d1d] pl-[7px] text-[#e6e6e6]" />
          <button type="button" aria-label="On cage" className={`${MOD} bg-[#545454]`}><MeshIcon /></button>
          <button type="button" aria-label="Edit mode" className={`${MOD} bg-[#4772b3]`}><EditModeIcon /></button>
          <button type="button" aria-label="Realtime" className={`${MOD} bg-[#4772b3]`}><MonitorIcon /></button>
          <button type="button" aria-label="Render" className={`${MOD} bg-[#4772b3]`}><RenderIcon /></button>
          <button type="button" aria-label="Options" className={`${MOD} bg-[#282828]`}><ChevronDown className="size-3" /></button>
        </div>
        <button type="button" aria-label="Remove" className="ml-1 mr-3 text-[#dcdcdc]"><CloseIcon /></button>
        <Grip />
      </div>
      <div className="mx-2 mt-3 flex h-[18px] gap-px overflow-hidden rounded text-[#e6e6e6]">
        <button type="button" aria-label="Browse node trees" className="flex w-[30px] items-center bg-[#282828] pl-[3px]"><TreeIcon className="size-4" /><SmallChevron className="-ml-[3px] size-4" /></button>
        <input aria-label="Node tree" defaultValue={tree} className="w-0 grow bg-[#1d1d1d] pl-[7px]" />
        <button type="button" aria-label="Fake user" className={`${MOD} bg-[#545454] text-[#9a9a9a]`}><ShieldIcon /></button>
        <button type="button" aria-label="Duplicate" className={`${MOD} bg-[#545454]`}><CopyIcon /></button>
        <button type="button" aria-label="Unlink" className={`${MOD} bg-[#545454]`}><CloseIcon className="size-3" /></button>
      </div>
      <button type="button" className="ml-2.5 mt-2 flex items-center gap-1 text-[#e0e0e0]">
        <ChevronRight />
        Manage
      </button>
    </section>
  );
}

function Properties() {
  return (
    <section className="flex min-h-0 flex-col overflow-hidden rounded-md border border-[#3a3a3a] bg-[#303030] [text-shadow:0_1px_2px_rgba(0,0,0,0.4)]">
      <header className="grid h-[25px] shrink-0 grid-cols-[1fr_119px_1fr] items-start pl-[7px] pr-[5px] pt-0.5">
        <button type="button" aria-label="Editor type" className="flex h-5 w-8 items-center rounded border border-[#3d3d3d] bg-[#262626] pl-[3px] text-[#e8e8e8]">
          <PropsEditorIcon className="size-4" />
          <SmallChevron className="-ml-[3px] size-4" />
        </button>
        <label className="flex h-5 items-center gap-[5px] rounded border border-[#3d3d3d] bg-[#1d1d1d] px-1 text-[#dcdcdc]">
          <SearchIcon className="size-4" />
          <input aria-label="Search" placeholder="Search" className="w-0 grow placeholder:text-[#6a6a6a]" />
        </label>
        <button type="button" aria-label="Options" className="ml-auto flex size-5 items-center justify-center rounded border border-[#3d3d3d] bg-[#262626] text-[#dcdcdc]">
          <SmallChevron className="size-4" />
        </button>
      </header>
      <div className="flex min-h-0 grow">
        <PropTabs />
        <div className="grow pl-[9px] pr-1.5">
          <div className="flex h-[35px] items-center pr-0.5 text-[#e0e0e0]">
            <ObjectIcon className="ml-[3px] mr-2 size-[15px]" />
            Plane
            <ChevronRight className="ml-[13px] mr-[5px] size-3.5" />
            <GeoNodesIcon className="mr-[7px] size-4 text-white" />
            GeometryNodes
            <button type="button" aria-label="Pin" className="ml-auto text-[#a0a0a0]"><PinOutline /></button>
          </div>
          <div className="mt-[9px] grid grid-cols-2 gap-px overflow-hidden rounded">
            <BigButton label="Apply All"><DownloadIcon /></BigButton>
            <BigButton label="Delete All"><CloseIcon className="size-3" /></BigButton>
            <BigButton label="Viewport Vis"><MonitorIcon /></BigButton>
            <BigButton label="Toggle Stack"><ExpandIcon /></BigButton>
          </div>
          <BigButton label="Add Modifier" className="mt-1.5 w-full rounded"><PlusIcon className="size-3" /></BigButton>
          <div className="mt-2.5 flex flex-col gap-0.5">
            <ModifierCard name="GeometryNodes" tree="Node tree #1" active />
            <ModifierCard name="GeometryNodes.001" tree="Node tree #2" />
            <ModifierCard name="GeometryNodes.002" tree="Node tree #3" />
          </div>
        </div>
      </div>
    </section>
  );
}

/* ---------- page ---------- */

function TreeOne() {
  return (
    <TreeEditor tree="Node tree #1" header={false} grid="bg-[position:16px_35px]" top="-mt-px">
      <Links
        links={[
          { d: "M1367 264 1764 315", color: "#666666" },
          { d: "M1367 224 1764 395", color: "#00d6a3" },
          { d: "M1367 224 2522 226", color: "#b3f1df" },
        ]}
      />
      <GlobalSettings place="left-[1113px] top-[162px]" />
      <MenuSwitch place="left-[1764px] top-[162px]" />
      <GroupIO title="Group Output" place="left-[2522px] top-[162px]" time="&lt; 0.1 ms" edge="outline-white" />
    </TreeEditor>
  );
}

function TreeTwo() {
  return (
    <TreeEditor tree="Node tree #2" grid="bg-[position:-4px_-4px]">
      <Links
        links={[
          { d: "M410 333 530 229", color: "#d0cec9", width: 4 },
          { d: "M410 115 1096 113", color: "#00d6a3" },
          { d: "M410 115 520 241", color: "#00d6a3" },
          { d: "M410 293 520 259", color: "#b3f1df" },
          { d: "M410 493 1096 233", color: "#cdcbe8" },
          { d: "M771 251 807 464", color: "#00d6a3", width: 4 },
          { d: "M1060 295 1096 193", color: "#6363c7", width: 2, dash: "12 3" },
          { d: "M1350 113 1565 115", color: "#00d6a3" },
        ]}
      />
      <GroupIO title="Group Input" place="left-[156px] top-[51px]" out />
      <GlobalSettings place="left-[156px] top-[231px]" edge="outline-white" />
      <section className="absolute left-[521px] top-[224px] flex h-[54px] w-[250px] items-center rounded-full border border-[#151515] bg-[#246283] pl-[17px] text-[19px] text-[#e4e4e4] shadow-[0_3px_10px_2px_rgba(0,0,0,0.45)] [text-shadow:0_1px_2px_rgba(0,0,0,0.6)]">
        <ChevronRight className="size-6" />
        Menu Switch
        <span className="ml-auto mr-4 h-3.5 w-1 border-x border-[#8fb0c1]" />
        <span className="absolute left-2 top-1"><Socket kind="menu" side="left" /></span>
        <span className="absolute -left-0.5 top-4"><Socket kind="geometry" side="left" /></span>
        <span className="absolute -left-0.5 top-[34px]"><Socket kind="geometry" side="left" /></span>
        <span className="absolute left-2 top-12"><Socket kind="virtual" side="left" /></span>
        <Socket kind="geometry" side="right" />
      </section>
      <Node title="Geometry Proximity" place="left-[807px] top-[231px]" header="bg-[#1d725e]" time="&lt; 0.1 ms">
        <div className="pb-1.5 pt-[7px]">
          <Row out label="Position" kind="vector" shape="diamond" />
          <Row out label="Distance" kind="value" shape="diamond" />
          <Row out label="Is Valid" kind="boolean" shape="diamond" />
          <div className="pb-0.5 pt-2.5"><NodeSelect value="Faces" /></div>
          <Row label="Geometry" kind="geometry" />
          <Row label="Group ID" kind="integer" shape="field" />
          <Row label="Sample Position" kind="vector" shape="diamond" />
          <Row label="Sample Group ID" kind="integer" shape="field" />
        </div>
      </Node>
      <Node title="Set Position" place="left-[1096px] top-[51px]" header="bg-[#1d725e]" time="&lt; 0.1 ms">
        <div className="pb-1 pt-[5px]">
          <Row label="Geometry" kind="geometry" also="geometry" />
          <Row label="Selection" kind="boolean" shape="field" />
          <Row label="Position" kind="vector" shape="diamond" />
          <Row label="Offset" kind="vector" shape="field" />
        </div>
      </Node>
      <GroupIO title="Group Output" place="left-[1565px] top-[51px]" time="0.10 ms" />
    </TreeEditor>
  );
}

function TreeThree() {
  return (
    <TreeEditor tree="Node tree #3" grid="bg-[position:6px_-2px]">
      <Links
        links={[
          { d: "M1357 373 1754 423", color: "#666666" },
          { d: "M1357 153 1754 463", color: "#00d6a3" },
          { d: "M1357 153 1429 424", color: "#00d6a3" },
          { d: "M1683 424 1754 503", color: "#00d6a3" },
          { d: "M1357 492 1429 504", color: "#70b2ff" },
          { d: "M1357 532 1429 543", color: "#6363c7" },
          { d: "M2008 334 2512 153", color: "#b3f1df" },
        ]}
      />
      <GroupIO title="Group Input" place="left-[1103px] top-[89px]" out />
      <GlobalSettings place="left-[1103px] top-[270px]" />
      <Node title="Store Named Attrib..." place="left-[1429px] top-[270px]" header="bg-[#1c2346]">
        <div className="pb-1 pt-2.5">
          <NodeSelect value="2D Vector" />
          <div className="pb-[5px] pt-2.5"><NodeSelect value="Face Corner" /></div>
          <Row label="Geometry" kind="geometry" also="geometry" />
          <Row label="Selection" kind="boolean" shape="field" />
          <Row label="Name" kind="string" />
          <Row label="Value" kind="vector" shape="field" />
        </div>
      </Node>
      <MenuSwitch place="left-[1754px] top-[270px]" />
      <GroupIO title="Group Output" place="left-[2512px] top-[89px]" time="&lt; 0.1 ms" edge="outline-[#e35a08]" />
    </TreeEditor>
  );
}

export default function App() {
  return (
    <main className="grid h-screen w-full grid-cols-[minmax(0,1fr)_406px] gap-x-1 bg-[#161616] font-['Inter','Noto_Sans',sans-serif] text-[11px] leading-4">
      <div className="grid min-h-0 grid-rows-[556fr_703fr_741fr] gap-y-[5px]">
        <TreeOne />
        <div className="grid min-h-0 grid-cols-[947fr_2482fr] gap-x-[5px]">
          <GroupEditor />
          <TreeTwo />
        </div>
        <TreeThree />
      </div>
      <div className="grid min-h-0 grid-rows-[544fr_1461fr] gap-y-[5px]">
        <Outliner />
        <Properties />
      </div>
    </main>
  );
}
